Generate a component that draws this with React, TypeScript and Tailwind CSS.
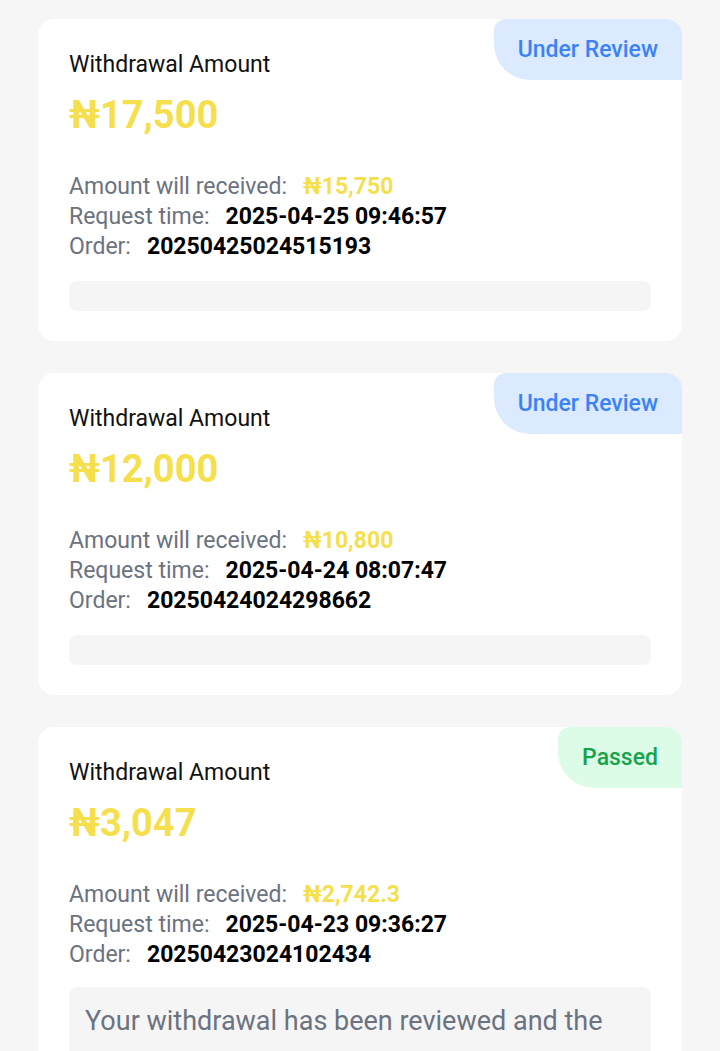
const records = [
  {
    amount: "₦17,500",
    received: "₦15,750",
    time: "2025-04-25 09:46:57",
    order: "20250425024515193",
    status: "review",
    note: "",
  },
  {
    amount: "₦12,000",
    received: "₦10,800",
    time: "2025-04-24 08:07:47",
    order: "20250424024298662",
    status: "review",
    note: "",
  },
  {
    amount: "₦3,047",
    received: "₦2,742.3",
    time: "2025-04-23 09:36:27",
    order: "20250423024102434",
    status: "passed",
    note: "Your withdrawal has been reviewed and the funds have been sent to your bank account.",
  },
];

function StatusBadge({ status }: { status: string }) {
  if (status === "passed") {
    return (
      <div className="absolute top-0 right-0 h-[61px] px-6 pt-px flex items-center bg-[#dcfce7] text-[#16a34a] text-[23px] font-medium rounded-tl-[12px] rounded-bl-[36px]">
        Passed
      </div>
    );
  }
  return (
    <div className="absolute top-0 right-0 h-[61px] px-6 pt-px flex items-center bg-[#dbeafe] text-[#3b82f6] text-[23px] font-medium rounded-tl-[12px] rounded-bl-[36px]">
      Under Review
    </div>
  );
}

export default function App() {
  return (
    <div className="min-h-screen bg-[#f6f6f6] px-[38px] pt-[19px] pb-8 font-['Roboto',sans-serif]">
      <div className="flex flex-col gap-8">
        {records.map((r) => (
          <div key={r.order} className="relative overflow-hidden bg-white rounded-2xl pt-[31px] pb-[30px] pl-[31px] pr-[31px]">
            <StatusBadge status={r.status} />
            <div className="text-[23px] leading-[30px] text-[#111]">Withdrawal Amount</div>
            <div className="mt-[12px] text-[38px] leading-[46px] font-bold text-[#f5df4d]">{r.amount}</div>

            <div className="mt-[34px] text-[23px] leading-[30px]">
              <div className="flex items-center gap-4">
                <span className="text-[#6b7280]">Amount will received:</span>
                <span className="text-[23px] font-bold text-[#f5df4d]">{r.received}</span>
              </div>
              <div className="flex items-center gap-4">
                <span className="text-[#6b7280]">Request time:</span>
                <span className="font-bold text-black">{r.time}</span>
              </div>
              <div className="flex items-center gap-4">
                <span className="text-[#6b7280]">Order:</span>
                <span className="font-bold text-black">{r.order}</span>
              </div>
            </div>

            {r.note ? (
              <div className="mt-[17px] bg-[#f5f5f5] rounded-lg px-4 pt-3 pb-4 text-[27px] leading-[44px] text-[#6b7280]">
                {r.note}
              </div>
            ) : (
              <div className="mt-[19px] h-[30px] bg-[#f5f5f5] rounded-lg" />
            )}
          </div>
        ))}
      </div>
    </div>
  );
}
